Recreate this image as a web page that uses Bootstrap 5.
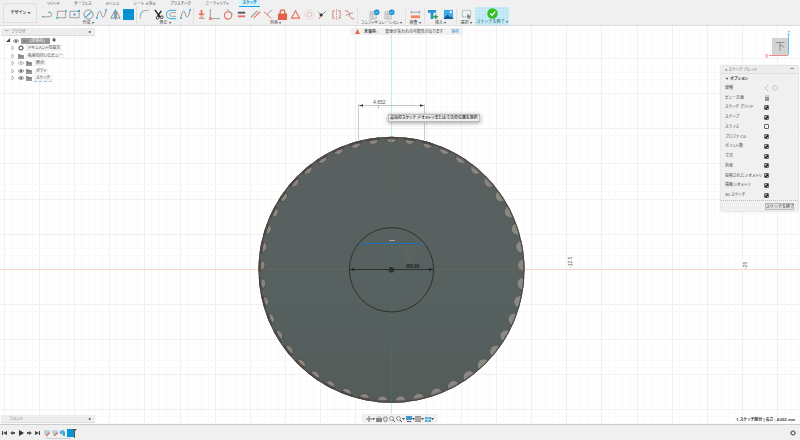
<!DOCTYPE html>
<html lang="ja">
<head>
<meta charset="utf-8">
<meta name="viewport" content="width=device-width, initial-scale=1">
<title>スケッチ</title>
<link href="https://cdn.jsdelivr.net/npm/bootstrap@5.3.0/dist/css/bootstrap.min.css" rel="stylesheet">
<style>
:root{--ui:#f0f0f0;--line:#d4d4d4;--ink:#444}
body{font-family:"Liberation Sans","Noto Sans CJK JP",sans-serif;font-size:4px;line-height:6px;color:var(--ink);font-feature-settings:"palt";background:#fff}
button,a{color:inherit;text-decoration:none}
button{background:none;border:0;padding:0;line-height:inherit}
svg{display:block;overflow:visible}
.app-top{background:var(--ui);border-bottom:1px solid #dcdcdc;height:26px}
.mode-btn{width:34px;height:20px;margin:3px 3px 0 3px;border:1px solid #dedede;border-radius:1px;font-weight:700}
.tabs{height:7px;line-height:7px;padding-left:7px;gap:14px}
.tabs a.active{color:#0a86c4;font-weight:700;background:#d8f1fa;border-bottom:1px solid #12a5e6;line-height:6px;width:21px;margin-left:-4px;text-align:center}
.tool-group{height:17px;border-right:1px solid #e0e0e0;padding:2px 2px 0}
.tool-group .tools{height:11px}
.tool-group .tools svg{width:11px;height:11px;margin-top:-1px}
.finish svg{width:11px;height:11px}
.glabel{line-height:5px;text-align:center;white-space:nowrap}
.g-create{width:97px}.g-modify{width:57px}.g-con{width:164px}.g-conf{width:48px}.g-insp{width:19px}.g-ins{width:32px}.g-sel{width:18px}
.finish{width:34px;height:18px;padding-top:1px;background:#c4ebf7 radial-gradient(#a5dced 25%,transparent 30%) 0 0/3px 3px;color:#37616f}
.stage{overflow:hidden;min-height:0}
.float-box{position:absolute;background:var(--ui)}
.warn{left:50%;margin-left:-49px;top:2px;height:7px;white-space:nowrap}
.phead{height:8px;background:#ededed;border-bottom:1px solid #dedede;color:#777}
.browser{left:1px;top:2px;width:94px;background:none}
.tree{height:45px;margin:1px 0 0 5px}
.tree>div{flex:1;gap:2px}
.tree>.leaf{padding-left:4px}
.tree .nm{background:#f2f2f2;padding:0 2px}
.root-tag{background:#999;color:#fff;gap:2px;padding:0 1px;width:29px}
.palette{right:2px;top:40px;width:77px;box-shadow:0 0 2px #bbb}
.sect{line-height:9px}
.rows{height:117px}
.rows>div{flex:1;padding-left:4px}
.rows label,.rows .lb{width:39px;white-space:nowrap}
.rows input{appearance:none;width:5px;height:5px;border:1px solid #666;border-radius:1px;margin:0;background:#f6f6f6}
.rows input:checked{background:#aaa linear-gradient(135deg,transparent 45%,#222 45%,#222 75%,transparent 75%)}
.pfoot{height:11px;border-top:1px dotted #bbb;padding-right:4px}
.pfoot button{border:1px solid #bbb;background:#e2e2e2;height:7px;width:29px;line-height:5px;white-space:nowrap}
.hint{left:388px;top:88px;height:8px;padding:0 1px;border:1px solid #bbb;background:#eee;color:#222;box-shadow:0 1px 4px #999;white-space:nowrap;font-weight:500}
.cube{right:4px;top:4px}
.comment{left:1px;bottom:1px;width:94px}
.navbar-mini{left:362px;bottom:1px;height:9px;width:76px}
.status{right:5px;bottom:1px;background:none;font-weight:700;color:#333}
.app-bottom{height:16px;background:var(--ui);border-top:1px solid #ccc;padding:0 4px 0 1px}
.app-bottom svg{width:8px;height:10px}
.history{margin-left:2px}
</style>
<script src="https://cdn.jsdelivr.net/npm/bootstrap@5.3.0/dist/js/bootstrap.bundle.min.js"></script>
</head>
<body class="d-flex flex-column vh-100 overflow-hidden">
<svg width="0" height="0" class="position-absolute" aria-hidden="true">
<defs>
<symbol id="i-line" viewBox="0 0 12 12"><path d="M1 8.500H8a2.500 2.500 0 0 0 0-5" fill="none" stroke="#999"/><path d="M0 8h2v1H0zM7 3h2v1H7z" fill="#2a9ad6"/></symbol>
<symbol id="i-rect" viewBox="0 0 12 12"><path d="M1.500 2.500h9v7h-9z" fill="none" stroke="#999"/><path d="M0 9h2v2H0zM10 1h2v2h-2z" fill="#5ab4e0"/></symbol>
<symbol id="i-crect" viewBox="0 0 12 12"><path d="M1 2.500h10v7H1z" fill="none" stroke="#999"/><path d="M5 5h2v2H5zM10 1h2v2h-2z" fill="#2a9ad6"/></symbol>
<symbol id="i-circ" viewBox="0 0 12 12"><circle cx="6" cy="6" r="5" fill="none" stroke="#888"/><path d="M2.500 9.500l7-7" stroke="#2a9ad6" stroke-width="1.200"/></symbol>
<symbol id="i-spl" viewBox="0 0 12 12"><path d="M1 10C3-1 5 2 6 6s3 5 5-5" fill="none" stroke="#888"/><path d="M0 9h2v2H0zM10 0h2v2h-2z" fill="#4db2e5"/></symbol>
<symbol id="i-mir" viewBox="0 0 12 12"><path d="M5 2v8H1zM7 2v8h4z" fill="none" stroke="#888"/><path d="M6 0v12" stroke="#2a9ad6" stroke-width=".8"/></symbol>
<symbol id="i-dim" viewBox="0 0 12 12"><path d="M-.5-.5h13v13h-13z" fill="#0696d7"/><path d="M1 2v2M11 2v2M1 3h10M1 9h10" stroke="#0571a5" stroke-width=".7" stroke-dasharray="1 .6"/></symbol>
<symbol id="i-fil" viewBox="0 0 12 12"><path d="M1.500 11V8Q2 2 8 1.500h3" fill="none" stroke="#aaa"/><path d="M1.500 7Q2 2 7 1.500" fill="none" stroke="#5bb8e3"/></symbol>
<symbol id="i-cut" viewBox="0 0 12 12"><path d="M2 1l6 8M9 2L5 8" stroke="#222" stroke-width="1.500"/><circle cx="5" cy="9.500" r="1.500" fill="none" stroke="#333"/><circle cx="9.500" cy="9" r="1.500" fill="none" stroke="#333"/></symbol>
<symbol id="i-off" viewBox="0 0 12 12"><path d="M11 1.500H5a4.500 4.500 0 0 0 0 9h6" fill="none" stroke="#55b4e2" stroke-width="1.200"/><path d="M11 4H6a2 2 0 0 0 0 4h5" fill="none" stroke="#999"/></symbol>
<symbol id="i-fix" viewBox="0 0 12 12"><path d="M5 1h2v4H5zM3 5h6v1.500H3zM4.500 7h3L6 9z" fill="#e4705c"/><path d="M3 10h6" stroke="#c55"/></symbol>
<symbol id="i-hv" viewBox="0 0 12 12"><path d="M1.500 0v10.500H12" fill="none" stroke="#999"/><path d="M0 9h3v3H0z" fill="#e98a7b"/></symbol>
<symbol id="i-tan" viewBox="0 0 12 12"><circle cx="5.500" cy="7" r="4" fill="none" stroke="#e46f60" stroke-width="1.200"/><path d="M4 0l7 6" stroke="#999"/></symbol>
<symbol id="i-eq" viewBox="0 0 12 12"><path d="M2 3h8v2H2z" fill="#555"/><path d="M2 7h8v2H2z" fill="#e4705c"/></symbol>
<symbol id="i-par" viewBox="0 0 12 12"><path d="M1 9l7-7" stroke="#999" stroke-width="1.200"/><path d="M4 10l7-7" stroke="#e4705c" stroke-width="1.200"/></symbol>
<symbol id="i-perp" viewBox="0 0 12 12"><path d="M4 6l6-5" stroke="#999"/><path d="M1 3l8 7" stroke="#e4705c"/></symbol>
<symbol id="i-lock" viewBox="0 0 12 12"><path d="M3.500 6V3a2.500 2 0 0 1 5 0v3" fill="none" stroke="#e4604a" stroke-width="1.400"/><path d="M1 5h10v7H1z" fill="#e4604a"/></symbol>
<symbol id="i-tri" viewBox="0 0 12 12"><path d="M6 2l4.500 8h-9z" fill="none" stroke="#e4705c" stroke-width="1.200"/></symbol>
<symbol id="i-con" viewBox="0 0 12 12"><circle cx="6" cy="6" r="5" fill="none" stroke="#ddd"/><circle cx="6" cy="6" r="2.500" fill="none" stroke="#f3b3a8"/></symbol>
<symbol id="i-coin" viewBox="0 0 12 12"><path d="M1 3l4 4 5-5" fill="none" stroke="#999"/><path d="M5 7l-3 4" stroke="#e4705c"/><path d="M3 5h3v3H3z" fill="#333"/></symbol>
<symbol id="i-sym" viewBox="0 0 12 12"><path d="M4 2H2v8h2M8 2h2v8H8" fill="none" stroke="#e4705c"/><path d="M6 0v12" stroke="#999" stroke-dasharray="1.500 1"/></symbol>
<symbol id="i-curv" viewBox="0 0 12 12"><path d="M1 2q5 0 5 4t5 5" fill="none" stroke="#e4705c"/><path d="M2 7l8-3" stroke="#999"/></symbol>
<symbol id="i-conf" viewBox="0 0 12 12"><path d="M1 3h7v8H1z" fill="#ddd" stroke="#aaa" stroke-width=".6"/><path d="M1 6h7M4 3v8" stroke="#aaa" stroke-width=".6"/><circle cx="8.500" cy="3.500" r="3" fill="#1090d6"/><path d="M7 3.500l1 1 2-2" fill="none" stroke="#fff" stroke-width=".8"/></symbol>
<symbol id="i-meas" viewBox="0 0 12 12"><path d="M1.500 2v3M10.500 2v3M2 3.500h8" stroke="#777" stroke-width=".7"/><path d="M1 7h10v3H1z" fill="#ef8662"/></symbol>
<symbol id="i-bolt" viewBox="0 0 12 12"><path d="M1 1h9v3H7v7H4V4H1z" fill="#2392cf"/><path d="M9.500 6v5M7 8.500h5" stroke="#2ba14b" stroke-width="1.500"/></symbol>
<symbol id="i-pic" viewBox="0 0 12 12"><path d="M1 1h10v10H1z" fill="#41abe8"/><path d="M1 10l4-4 3 3 1-1 2 2v1H1z" fill="#14618f"/><circle cx="8.500" cy="3.500" r="1.200" fill="#fff"/></symbol>
<symbol id="i-sel" viewBox="0 0 12 12"><path d="M1.500 1.500h9v7h-9z" fill="none" stroke="#6a9c85" stroke-width=".8" stroke-dasharray="1.500 .8"/><path d="M7 5l4 4H9l1 2-1 .5-1-2-1 1z" fill="#777"/></symbol>
<symbol id="i-ok" viewBox="0 0 12 12"><circle cx="6" cy="6" r="5.700" fill="#35bf22"/><path d="M3.500 6l2 2L9 4" fill="none" stroke="#fff" stroke-width="1.500"/></symbol>
<symbol id="i-exp" viewBox="0 0 6 6"><path d="M2 1l2 2-2 2z" fill="none" stroke="#999" stroke-width=".6"/></symbol>
<symbol id="i-eye" viewBox="0 0 6 6"><path d="M0 3q3-3.500 6 0-3 3.500-6 0z" fill="#ddd" stroke="#777" stroke-width=".6"/><circle cx="3" cy="3" r="1" fill="#555"/></symbol>
<symbol id="i-eyeoff" viewBox="0 0 6 6"><path d="M0 3q3-3.500 6 0-3 3.500-6 0z" fill="#eee" stroke="#aaa" stroke-width=".6"/><circle cx="3" cy="3" r="1" fill="#bbb"/></symbol>
<symbol id="i-fold" viewBox="0 0 6 6"><path d="M0 1h2l1 1h3v4H0z" fill="#999"/><path d="M1 3h4" stroke="#555" stroke-width=".6"/></symbol>
<symbol id="i-gear" viewBox="0 0 6 6"><circle cx="3" cy="3" r="1.800" fill="none" stroke="#666" stroke-width="1.100"/><circle cx="3" cy="3" r="2.500" fill="none" stroke="#666" stroke-width=".7" stroke-dasharray="1 1"/></symbol>
<symbol id="i-sk" viewBox="0 0 8 10"><path d="M1 2h6v5H1z" fill="#c9dde7"/><path d="M1 4h6M3 2v5" stroke="#93b4c5" stroke-width=".5"/><path d="M3 8l3.500-3.500" stroke="#df6a57" stroke-width="1.200"/></symbol>
</defs>
</svg>

<header class="app-top d-flex flex-shrink-0">
<button class="mode-btn flex-shrink-0" type="button">デザイン ▾</button>
<div class="flex-grow-1">
<nav class="tabs d-flex text-nowrap" aria-label="ツール タブ"><a href="#">ソリッド</a><a href="#">サーフェス</a><a href="#">メッシュ</a><a href="#">シート メタル</a><a href="#">プラスチック</a><a href="#">ユーティリティ</a><a href="#" class="active">スケッチ</a></nav>
<div class="d-flex">
<div class="tool-group g-create"><div class="tools d-flex justify-content-between" data-icons="line rect crect circ spl mir dim"></div><div class="glabel">作成 ▾</div></div>
<div class="tool-group g-modify"><div class="tools d-flex justify-content-between" data-icons="fil cut off spl"></div><div class="glabel">修正 ▾</div></div>
<div class="tool-group g-con"><div class="tools d-flex justify-content-between" data-icons="fix hv tan eq par perp lock tri con coin sym curv"></div><div class="glabel">拘束 ▾</div></div>
<div class="tool-group g-conf"><div class="tools d-flex justify-content-center gap-1" data-icons="conf conf"></div><div class="glabel">コンフィギュレーション ▾</div></div>
<div class="tool-group g-insp"><div class="tools d-flex justify-content-center" data-icons="meas"></div><div class="glabel">検査 ▾</div></div>
<div class="tool-group g-ins"><div class="tools d-flex justify-content-between" data-icons="bolt pic"></div><div class="glabel">挿入 ▾</div></div>
<div class="tool-group g-sel border-end-0"><div class="tools d-flex justify-content-center" data-icons="sel"></div><div class="glabel">選択 ▾</div></div>
<button class="finish d-flex flex-column align-items-center" type="button"><svg class="flex-shrink-0"><use href="#i-ok"/></svg><span class="glabel">スケッチを終了 ▾</span></button>
</div>
</div>
</header>

<main class="stage position-relative flex-grow-1">
<svg class="w-100 h-100" viewBox="0 26 800 398" preserveAspectRatio="xMidYMid slice" role="img" aria-label="スケッチ ビュー">
<defs>
<clipPath id="disk"><circle cx="391.500" cy="269.800" r="133"/></clipPath>
<linearGradient id="body" x1="0" y1="0" x2="0" y2="1"><stop offset="0" stop-color="#5a605f"/><stop offset=".6" stop-color="#566160"/><stop offset="1" stop-color="#545c59"/></linearGradient>
</defs>
<g id="grid" stroke-width="1"></g>
<path d="M0 269.500H800" stroke="#fbd5cc"/><path d="M391.500 26V424" stroke="#c4efd8"/>
<path d="M358.500 104V140M424.500 104V140" stroke="#ccc"/>
<circle cx="391.500" cy="269.800" r="133" fill="url(#body)"/>
<g id="teeth" clip-path="url(#disk)"></g>
<circle cx="391.500" cy="269.800" r="132.500" fill="none" stroke="#49423e"/>
<path d="M259 269.500H524" stroke="#75655b" stroke-width=".6"/><path d="M391.500 137V403" stroke="#45705f" stroke-width=".6"/>
<circle cx="391.500" cy="269.800" r="42.200" fill="none" stroke="#2f3030"/>
<path d="M359 243.500H424" stroke="#1f72b5"/><path d="M389 240.500h6" stroke="#aaa69a"/>
<path d="M399 246.500h22M401 249h18M403 252h14M404 255h11M405 258h9M406 261h7" stroke="#6b7560" stroke-dasharray="1 1"/>
<path d="M349.500 269.500H433.500" stroke="#303131"/><path d="M350 269.500l4-1.500v3zM433 269.500l-4-1.500v3z" fill="#222"/>
<circle cx="391.500" cy="269.800" r="2.800" fill="#2b3030"/>
<text x="406" y="268" font-size="5" font-weight="700" fill="#222">Ø6.00</text>
<path d="M359 105.500H424M378.500 105v4" stroke="#aaa" stroke-width=".7"/><path d="M359 105.500l4-1.200v2.400zM424 105.500l-4-1.200v2.400z" fill="#333"/>
<text x="373" y="104" font-size="5" fill="#555">4.652</text>
<text transform="translate(572 268) rotate(-90)" font-size="5" fill="#555">-12.5</text>
<text transform="translate(747 269) rotate(-90)" font-size="5" fill="#555">-25</text>
</svg>

<div class="float-box warn d-flex align-items-center px-1"><svg width="5" height="5" viewBox="0 0 6 6"><path d="M3 0l3 6H0z" fill="#e8694a"/></svg><b class="ms-1">未保存:</b><span class="mx-2">変更が失われる可能性があります</span><a href="#" style="color:#0a86c4">保存</a></div>

<aside class="float-box browser">
<div class="phead d-flex align-items-center justify-content-between px-1"><span>━&nbsp; ブラウザ</span><span class="text-dark">●</span></div>
<div class="tree d-flex flex-column" id="tree"></div>
</aside>

<div class="float-box hint">追加のスケッチ ジオメトリまたは寸法の位置を選択</div>

<div class="float-box cube bg-transparent"><svg width="32" height="30" viewBox="0 0 32 30"><path d="M8 8h16v17H8z" fill="#d3d3d3"/><path d="M24.500 4v21" stroke="#56c3e8"/><path d="M5 25.500h19" stroke="#ef8d8d"/><text x="11" y="20" font-size="10" fill="#7c888e">下</text><text x="1" y="28" font-size="5" fill="#e76060">X</text><text x="23" y="5" font-size="5" fill="#56c3e8">Z</text></svg></div>

<aside class="float-box palette">
<div class="phead d-flex align-items-center justify-content-between px-1"><span>● スケッチ パレット</span><span class="text-dark">━</span></div>
<div class="px-1 fw-bold sect">▼ オプション</div>
<div class="rows d-flex flex-column" id="opts"></div>
<div class="pfoot d-flex justify-content-end align-items-center"><button type="button">スケッチを終了</button></div>
</aside>

<div class="float-box comment"><div class="phead d-flex align-items-center justify-content-between ps-2 pe-1"><span>コメント</span><span class="text-dark">●</span></div></div>
<div class="float-box navbar-mini d-flex align-items-center justify-content-between px-1" id="nav"></div>
<div class="float-box status">1 スケッチ線分 | 長さ : 4.652 mm</div>
</main>

<footer class="app-bottom d-flex align-items-center justify-content-between flex-shrink-0">
<div class="d-flex align-items-center">
<button type="button" aria-label="先頭"><svg viewBox="0 0 8 10"><path d="M1 3h1v4H1zM6 3v4L2 5z" fill="#444"/></svg></button>
<button type="button" aria-label="戻る"><svg viewBox="0 0 8 10"><path d="M4 3v4L1 5zM4 4h2v2H4z" fill="#555"/></svg></button>
<button type="button" aria-label="再生"><svg viewBox="0 0 8 10"><path d="M2 2v6l5-3z" fill="#333"/></svg></button>
<button type="button" aria-label="進む"><svg viewBox="0 0 8 10"><path d="M4 3v4l3-2zM2 4h2v2H2z" fill="#555"/></svg></button>
<button type="button" aria-label="末尾"><svg viewBox="0 0 8 10"><path d="M6 3h1v4H6zM2 3v4l4-2z" fill="#444"/></svg></button>
<div class="history d-flex">
<button type="button" aria-label="スケッチ1"><svg><use href="#i-sk"/></svg></button>
<button type="button" aria-label="スケッチ2"><svg><use href="#i-sk"/></svg></button>
<button type="button" aria-label="押し出し"><svg viewBox="0 0 8 10"><path d="M1 4q3-4 5 0v4H4V5z" fill="#4ba4d6"/><circle cx="2.500" cy="4.500" r="2" fill="#5fb1de"/></svg></button>
<button type="button" aria-label="スケッチ3"><svg viewBox="0 0 8 10"><path d="M0 1h7v8H0z" fill="#0696d7"/><path d="M5 1h5L8 3v7H7V3z" fill="#555"/><path d="M-20 8v2.500H3V9" fill="none" stroke="#bbb" stroke-width=".6"/></svg></button>
</div>
</div>
<button type="button" aria-label="設定"><svg style="width:6px;height:6px"><use href="#i-gear"/></svg></button>
</footer>

<script>
document.querySelectorAll('[data-icons]').forEach(function (box) {
  box.innerHTML = box.dataset.icons.split(' ').map(function (n) {
    return '<button type="button" aria-label="' + n + '"><svg><use href="#i-' + n + '"/></svg></button>';
  }).join('');
});

// Grid: 0.5 mm minor lines, 2.5 mm major lines around the origin.
var g = '', s = 7.03;
for (var i = -57; i <= 59; i++) {
  var c = i % 5 ? '#fafafa' : '#f0f0f0', x = Math.round(391.5 + i * s) - .5, y = Math.round(269.8 + i * s) - .5;
  g += '<path stroke="' + c + '" d="M' + x + ' 26V424' + (y > 26 && y < 424 ? 'M0 ' + y + 'H800' : '') + '"/>';
}
document.getElementById('grid').innerHTML = g;

// 45 rim pockets, lit from the lower right.
var t = '';
for (var k = 0; k < 45; k++) {
  var a = k * 8, d = (a - 105) * Math.PI / 180, lit = Math.max(0, Math.cos(d));
  t += '<g transform="rotate(' + a + ' 391.5 269.8) translate(391.5 136.8)">' +
    '<ellipse rx="6.500" ry="6.300" fill="#504b48"/>' +
    '<path d="M-5 3Q0 1.500 5 3Q3 6 0 6Q-3 6-5 3z" fill="#8c8680"/>' +
    '<ellipse rx="6" ry="6.300" fill="#8b8984" opacity="' + Math.min(1, lit * 1.2).toFixed(2) + '"/></g>';
}
document.getElementById('teeth').innerHTML = t;

var ic = function (n) { return '<svg width="6" height="6" class="flex-shrink-0"><use href="#i-' + n + '"/></svg>'; };
var rows = [['ドキュメントの設定', 'gear'], ['名前の付いたビュー', 'fold'], ['原点', 'fold', 'eyeoff'], ['ボディ', 'fold', 'eye'], ['スケッチ', 'fold', 'eye']];
document.getElementById('tree').innerHTML =
  '<div class="d-flex align-items-center"><span style="width:5px">◢</span>' + ic('eye') +
  '<span class="root-tag d-flex align-items-center">' + ic('fold') + '<span>(未保存)</span></span><span>◉</span></div>' +
  rows.map(function (r, n) {
    return '<div class="leaf d-flex align-items-center">' + ic('exp') + (r[2] ? ic(r[2]) : '') + ic(r[1]) +
      '<span class="nm"' + (n === 4 ? ' style="border-bottom:1px dashed #8ccbe6"' : '') + '>' + r[0] + '</span></div>';
  }).join('');

var opts = ['線種', 'ビュー正面', 'スケッチ グリッド', 'スナップ', 'スライス', 'プロファイル', 'ポイント数', '寸法', '拘束', '投影されたジオメトリ', '構築ジオメトリ', '3D スケッチ'];
document.getElementById('opts').innerHTML = opts.map(function (o, n) {
  var l = '<label for="o' + n + '">' + o + '</label>';
  if (n === 0) return '<div class="d-flex align-items-center"><span class="lb">' + o + '</span><svg width="14" height="6" viewBox="0 0 14 6"><path d="M4 0L1 3l3 3" fill="none" stroke="#eda093" stroke-width=".8"/><circle cx="11" cy="3" r="2.300" fill="none" stroke="#d9b5ad" stroke-width=".8"/></svg></div>';
  if (n === 1) return '<div class="d-flex align-items-center"><span class="lb">' + o + '</span><svg width="6" height="6" viewBox="0 0 6 6"><path d="M1 2h4v4H1z" fill="#8d9aa2"/><path d="M1 1h4" stroke="#aaa"/></svg></div>';
  return '<div class="d-flex align-items-center">' + l + '<input type="checkbox" id="o' + n + '"' + (n === 4 ? '' : ' checked') + '></div>';
}).join('');

var nav = [
  '<path d="M3 0v6M0 3h6" stroke="#777"/><circle cx="3" cy="3" r="1.500" fill="#999"/>',
  '<path d="M0 2h6v4H0z" fill="#888"/><path d="M1 1h4" stroke="#aaa"/>',
  '<path d="M1 3l1-2h3v4L3 6z" fill="#ddd" stroke="#777" stroke-width=".7"/>',
  '<circle cx="2.500" cy="2.500" r="2" fill="none" stroke="#888" stroke-width=".8"/><path d="M4 4l2 2" stroke="#555"/>',
  '<circle cx="2.500" cy="2.500" r="2" fill="none" stroke="#888" stroke-width=".8"/><path d="M4 4l2 2" stroke="#555"/>',
  '<path d="M0 0h6v4H0z" fill="#4298c8"/><path d="M1 5.500h4" stroke="#666"/>',
  '<path d="M0 0h6v6H0z" fill="#999"/><path d="M0 2h6M0 4h6" stroke="#ddd" stroke-width=".5"/>',
  '<path d="M0 1h6v5H0z" fill="#5aaeda"/><path d="M3 1v5M0 3.500h6" stroke="#fff" stroke-width=".5"/>'];
document.getElementById('nav').innerHTML = nav.map(function (p, n) {
  return '<button type="button" class="d-flex align-items-center" aria-label="表示' + (n + 1) + '"><svg width="6" height="6" viewBox="0 0 6 6">' + p + '</svg>' + (n === 0 || n > 3 ? '<svg width="3" height="2" viewBox="0 0 3 2"><path d="M0 0h3L1.500 2z" fill="#444"/></svg>' : '') + '</button>';
}).join('');
</script>
</body>
</html>
